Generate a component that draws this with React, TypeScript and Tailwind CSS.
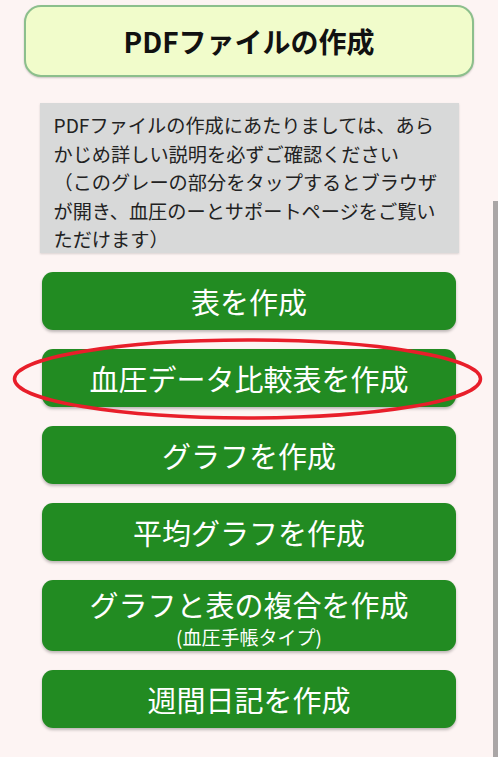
import type { ReactNode } from 'react';

const font = { fontFamily: '"Noto Sans CJK JP", "Noto Sans", sans-serif' };

const noteLines = [
  'PDFファイルの作成にあたりましては、あら',
  'かじめ詳しい説明を必ずご確認ください',
  '（このグレーの部分をタップするとブラウザ',
  'が開き、血圧のーとサポートページをご覧い',
  'ただけます）',
];

const GreenButton = ({ children, tall }: { children: ReactNode; tall?: boolean }) => (
  <button
    className={`w-[414px] mx-auto flex flex-col items-center rounded-[11px] bg-[#228b22] text-white shadow-[0_2px_3px_rgba(0,0,0,0.25)] ${
      tall ? 'h-[71px] justify-start pt-[5px]' : 'h-[58px] justify-center'
    }`}
  >
    {children}
  </button>
);

export default function App() {
  return (
    <div className="relative min-h-screen w-[498px] bg-[#fdf4f3] pt-[5px]" style={font}>
      {/* タイトル */}
      <div className="mx-auto flex h-[72px] w-[450px] items-center justify-center rounded-[17px] border-2 border-[#8cbf8c] bg-[#f1fccb] shadow-[0_1px_2px_rgba(0,0,0,0.2)]">
        <h1 className="text-[28px] font-bold text-[#111]">PDFファイルの作成</h1>
      </div>

      {/* 説明 */}
      <div className="mx-auto mt-[26px] h-[150px] w-[419px] bg-[#d8d9d9] px-[14px] pt-[8px] shadow-[0_1px_2px_rgba(0,0,0,0.15)]">
        {noteLines.map((line) => (
          <p key={line} className="whitespace-nowrap text-[19.2px] leading-[28.5px] text-[#222]">
            {line}
          </p>
        ))}
      </div>

      {/* ボタン */}
      <div className="mt-[19px] flex flex-col gap-[19px]">
        <GreenButton>
          <span className="text-[29px] leading-none">表を作成</span>
        </GreenButton>
        <div className="relative">
          <GreenButton>
            <span className="text-[29px] leading-none">血圧データ比較表を作成</span>
          </GreenButton>
          <svg
            className="pointer-events-none absolute left-[12px] top-[-11px]"
            width="471"
            height="82"
            viewBox="0 0 471 82"
          >
            <ellipse cx="235.5" cy="41" rx="233" ry="39" fill="none" stroke="#e81e2a" strokeWidth="3.5" />
          </svg>
        </div>
        <GreenButton>
          <span className="text-[29px] leading-none">グラフを作成</span>
        </GreenButton>
        <GreenButton>
          <span className="text-[29px] leading-none">平均グラフを作成</span>
        </GreenButton>
        <GreenButton tall>
          <span className="block text-[29px] leading-[38px]">グラフと表の複合を作成</span>
          <span className="block text-[19px] leading-[28px]">(血圧手帳タイプ)</span>
        </GreenButton>
        <GreenButton>
          <span className="text-[29px] leading-none">週間日記を作成</span>
        </GreenButton>
      </div>

      {/* スクロールバー */}
      <div className="absolute right-0 top-[201px] bottom-0 w-[5px] bg-[#aaa6a6]" />
    </div>
  );
}
